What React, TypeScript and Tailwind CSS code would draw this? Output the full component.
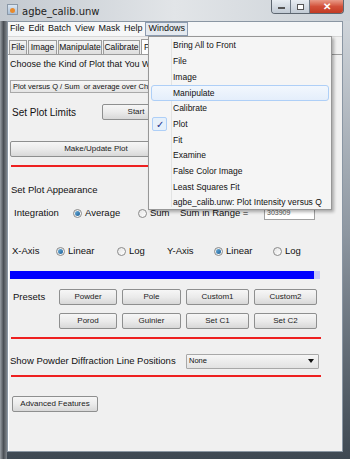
import React from "react";

const F = { fontFamily: '"Liberation Sans", Arial, sans-serif' };
const TF = { fontFamily: '"DejaVu Sans", "Liberation Sans", sans-serif' };

function Btn({ w, label, cls = "" }: { w: number; label: string; cls?: string }) {
  return (
    <div
      className={`h-[16px] flex items-center justify-center rounded-[2px] border border-[#8e8f8f] bg-gradient-to-b from-[#f6f6f6] via-[#ebebeb] to-[#d8d8d8] text-[8px] text-[#1a1a1a] shrink-0 whitespace-nowrap ${cls}`}
      style={{ width: w }}
    >
      {label}
    </div>
  );
}

function Radio({ on }: { on?: boolean }) {
  return (
    <div className="w-[9px] h-[9px] rounded-full border border-[#8a8a8a] bg-gradient-to-br from-[#e4e4e4] to-[#ffffff] flex items-center justify-center shrink-0">
      {on && <div className="w-[5px] h-[5px] rounded-full bg-gradient-to-br from-[#6bb0dc] to-[#1b5f96]" />}
    </div>
  );
}

function RedLine() {
  return <div className="h-[2px] w-[310px] ml-[1px] bg-[#ee2020]" />;
}

export default function App() {
  const menuItems = [
    "Bring All to Front",
    "File",
    "Image",
    "Manipulate",
    "Calibrate",
    "Plot",
    "Fit",
    "Examine",
    "False Color Image",
    "Least Squares Fit",
    "agbe_calib.unw: Plot Intensity versus Q",
  ];
  return (
    <div
      className="relative w-[350px] h-[459px] overflow-hidden bg-gradient-to-b from-[#d6dbe0] via-[#8f98a2] to-[#3e4852]"
      style={F}
    >
      {/* left dark frame strip */}
      <div className="absolute left-0 top-[21px] w-[7px] h-[438px] bg-gradient-to-r from-[#9aa0a6] via-[#4b5056] to-[#80868c]" />
      {/* title bar */}
      <div className="h-[21px] flex items-start bg-gradient-to-r from-[#c3c9d0] via-[#e2e5e8] to-[#cbd1d7] relative">
        <div className="ml-[7px] mt-[4px] w-[11px] h-[11px] border border-[#8a98a8] bg-gradient-to-b from-[#dbe6f2] to-[#a9bfd6] flex items-end justify-center">
          <div className="w-[5px] h-[5px] bg-[#e88a2c] rounded-full mb-[1px]" />
        </div>
        <div className="ml-[4px] mt-[4px] text-[10px] text-[#1d1d1d]" style={TF}>
          agbe_calib.unw
        </div>
        <div className="absolute right-[6px] top-0 flex h-[14px] rounded-b-[4px] border border-t-0 border-[#5d6670] overflow-hidden">
          <div className="w-[19px] bg-gradient-to-b from-[#e8edf2] to-[#c1cad4] border-r border-[#6f7a86] flex items-center justify-center">
            <div className="w-[7px] h-[2px] bg-white border border-[#555] mt-[3px]" />
          </div>
          <div className="w-[19px] bg-gradient-to-b from-[#e8edf2] to-[#c1cad4] border-r border-[#6f7a86] flex items-center justify-center">
            <div className="w-[7px] h-[6px] border-[1.5px] border-[#555] bg-white" />
          </div>
          <div className="w-[33px] bg-gradient-to-b from-[#e89a88] via-[#d2503a] to-[#c23a22] flex items-center justify-center text-white text-[10px] font-bold">
            ✕
          </div>
        </div>
      </div>

      {/* client */}
      <div className="relative mx-[7px] h-[431px] bg-[#f0f0f0] border border-[#8a96a3] flex flex-col">
        {/* menubar */}
        <div className="h-[15px] flex items-center bg-[#f6f7f8] border-b border-[#d7d7d7] text-[9px] text-[#111] whitespace-nowrap">
          <span className="px-[2px]">File</span>
          <span className="px-[2px]">Edit</span>
          <span className="px-[2px]">Batch</span>
          <span className="px-[2px]">View</span>
          <span className="px-[2px]">Mask</span>
          <span className="px-[2px]">Help</span>
          <span className="ml-[1px] px-[2px] h-[14px] flex items-center border border-[#8c9bb0] bg-[#e4e9ef]">Windows</span>
        </div>

        {/* tabs */}
        <div className="mt-[2px] h-[15px] flex items-end pl-[1px] text-[8.5px] text-[#111] whitespace-nowrap">
          {[
            ["File", 18],
            ["Image", 29],
            ["Manipulate", 44],
            ["Calibrate", 37],
          ].map(([t, w]) => (
            <div
              key={t as string}
              className="h-[14px] mr-[1px] border border-b-0 border-[#9c9c9c] bg-gradient-to-b from-[#f4f4f4] to-[#dedede] flex items-center justify-center"
              style={{ width: w as number }}
            >
              {t}
            </div>
          ))}
          <div className="h-[15px] w-[30px] border border-b-0 border-[#9c9c9c] bg-white pl-[2px] flex items-center">P</div>
        </div>
        <div className="h-[1px] bg-[#9c9c9c] w-full" />

        {/* panel body */}
        <div className="flex-1 bg-[#f0f0f0] border-l border-white pl-[1px] flex flex-col text-[9.5px] text-[#111] whitespace-nowrap">
          <div className="mt-[3px] h-[14px] flex items-center text-[9px]">Choose the Kind of Plot that You Wish to Make</div>
          <div className="mt-[8px] h-[13px] w-[320px] border border-[#a8a8a8] bg-gradient-to-b from-[#f7f7f7] to-[#e4e4e4] flex items-center pl-[2px] text-[7.5px]">
            Plot versus Q / Sum&nbsp; or average over Chi
          </div>
          <div className="mt-[11px] h-[16px] flex items-center">
            <span className="ml-[2px] w-[90px] text-[10px]">Set Plot Limits</span>
            <Btn w={68} label="Start" />
          </div>
          <div className="mt-[21px]">
            <Btn w={172} label="Make/Update Plot" />
          </div>
          <div className="mt-[8px]">
            <RedLine />
          </div>
          <div className="mt-[17px] h-[12px] flex items-center ml-[1px]">Set Plot Appearance</div>
          <div className="mt-[11px] h-[12px] flex items-center">
            <span className="ml-[4px] w-[59px]">Integration</span>
            <Radio on />
            <span className="ml-[3px] w-[53px]">Average</span>
            <Radio />
            <span className="ml-[3px] w-[30px]">Sum</span>
            <span className="w-[84px]">Sum in Range =</span>
            <div className="w-[51px] h-[13px] border border-[#a0a0a0] bg-white text-[7px] pl-[2px] flex items-center text-[#555]">303909</div>
          </div>
          <div className="mt-[26px] h-[12px] flex items-center">
            <span className="ml-[2px] w-[44px]">X-Axis</span>
            <Radio on />
            <span className="ml-[3px] w-[49px]">Linear</span>
            <Radio />
            <span className="ml-[3px] w-[38px]">Log</span>
            <span className="w-[47px]">Y-Axis</span>
            <Radio on />
            <span className="ml-[3px] w-[47px]">Linear</span>
            <Radio />
            <span className="ml-[3px]">Log</span>
          </div>
          <div className="mt-[14px] h-[8px] flex">
            <div className="w-[304px] bg-[#0000ff]" />
            <div className="w-[6px] bg-[#c8c8f6]" />
          </div>
          <div className="mt-[10px] flex">
            <span className="ml-[3px] w-[46px] h-[16px] flex items-center text-[9.5px]">Presets</span>
            <div className="flex flex-col gap-[8px]">
              <div className="flex gap-[5px]">
                <Btn w={58} label="Powder" />
                <Btn w={59} label="Pole" />
                <Btn w={63} label="Custom1" />
                <Btn w={63} label="Custom2" />
              </div>
              <div className="flex gap-[5px]">
                <Btn w={58} label="Porod" />
                <Btn w={59} label="Guinier" />
                <Btn w={63} label="Set C1" />
                <Btn w={63} label="Set C2" />
              </div>
            </div>
          </div>
          <div className="mt-[8px]">
            <RedLine />
          </div>
          <div className="mt-[14px] h-[16px] flex items-center">
            <span className="w-[176px] text-[9.5px]">Show Powder Diffraction Line Positions</span>
            <div className="w-[133px] h-[15px] border border-[#a8a8a8] rounded-[1px] bg-gradient-to-b from-[#f6f6f6] to-[#e2e2e2] flex items-center pl-[2px] pr-[4px] text-[7.5px] justify-between">
              <span>None</span>
              <span className="w-0 h-0 border-l-[3px] border-r-[3px] border-t-[4px] border-l-transparent border-r-transparent border-t-[#111]" />
            </div>
          </div>
          <div className="mt-[6px]">
            <RedLine />
          </div>
          <div className="mt-[19px] ml-[2px]">
            <Btn w={86} label="Advanced Features" />
          </div>
        </div>
      </div>

      {/* dropdown menu */}
      <div className="absolute left-[148px] top-[36px] w-[184px] h-[174px] bg-[#f5f5f5] border border-[#979797] shadow-[2px_2px_3px_rgba(0,0,0,0.3)] pt-[1px] whitespace-nowrap">
        <div className="absolute left-[22px] top-[2px] bottom-[2px] w-[1px] bg-[#e2e3e3]" />
        {menuItems.map((m) => (
          <div key={m} className="relative h-[15.7px] flex items-center text-[8.5px] text-[#111]">
            {m === "Manipulate" && (
              <div className="absolute left-[2px] right-[2px] top-0 bottom-0 rounded-[3px] border border-[#aecff7] bg-gradient-to-b from-[#f2f7fd] to-[#e4eefb]" />
            )}
            {m === "Plot" && (
              <div className="absolute left-[3px] top-[1px] w-[15px] h-[14px] rounded-[2px] border border-[#aecff7] bg-[#e6f0fa] flex items-center justify-center text-[#1d2f8a] text-[10px]">
                ✓
              </div>
            )}
            <span className="relative ml-[24px]">{m}</span>
          </div>
        ))}
      </div>
    </div>
  );
}
